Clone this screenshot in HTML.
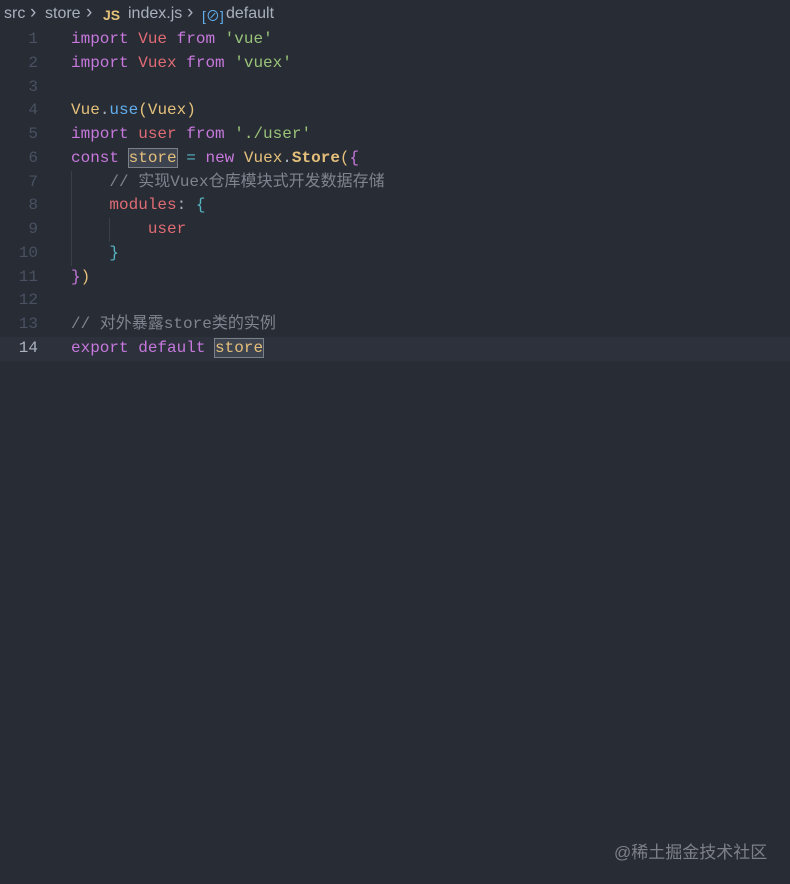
<!DOCTYPE html>
<html><head><meta charset="utf-8"><style>
html,body{margin:0;padding:0;width:790px;height:884px;background:#282c34;overflow:hidden}
.bc{position:absolute;top:5px;left:0;height:22px;width:400px;font:16px "Liberation Sans","Noto Sans CJK SC",sans-serif;color:#a9b0bd;white-space:nowrap}
.bc span{position:absolute;top:0}
.bc .ch{font-size:19px;top:-3px}
.js{color:#e5c07b;font-weight:bold;font-size:14px;top:2px!important}
.code{position:absolute;top:28px;left:0;right:0;font:16px/23.77px "Liberation Mono","Noto Sans CJK SC",monospace}
.ln{position:absolute;left:0;width:38px;text-align:right;color:#495162}
.l{position:relative;height:23.77px}
.t{position:absolute;left:71px;color:#abb2bf;white-space:pre}
.cur{background:#2c313c}
.cur .ln{color:#abb2bf}
.k{color:#c678dd}.v{color:#e06c75}.s{color:#98c379}.y{color:#e5c07b}.f{color:#61afef}.c{color:#7f848e}.o{color:#56b6c2}.b{color:#e5c07b;font-weight:bold}
.hl{outline:1px solid #7a7f88;background:#3e4350}
.guide{position:absolute;left:71px;width:1px;background:#3b4048}
.wm{position:absolute;left:614px;top:838px;font:17px "Liberation Sans","Noto Sans CJK SC",sans-serif;color:#7d8088}
</style></head><body>
<div class="bc"><span style="left:4px">src</span><span class="ch" style="left:30px">›</span><span style="left:45px">store</span><span class="ch" style="left:86px">›</span><span class="js" style="left:103px">JS</span><span style="left:128px">index.js</span><span class="ch" style="left:187px">›</span><span style="left:202px;color:#61afef;font-size:14px;top:1px">[⊘]</span><span style="left:226px">default</span></div>
<div class="code">
<div class="guide" style="top:143px;height:95px"></div>
<div class="guide" style="left:109px;top:190px;height:24px"></div>
<div class="l"><span class="ln">1</span><span class="t"><span class="k">import</span> <span class="v">Vue</span> <span class="k">from</span> <span class="s">'vue'</span></span></div>
<div class="l"><span class="ln">2</span><span class="t"><span class="k">import</span> <span class="v">Vuex</span> <span class="k">from</span> <span class="s">'vuex'</span></span></div>
<div class="l"><span class="ln">3</span></div>
<div class="l"><span class="ln">4</span><span class="t"><span class="y">Vue</span>.<span class="f">use</span><span class="y">(</span><span class="y">Vuex</span><span class="y">)</span></span></div>
<div class="l"><span class="ln">5</span><span class="t"><span class="k">import</span> <span class="v">user</span> <span class="k">from</span> <span class="s">'./user'</span></span></div>
<div class="l"><span class="ln">6</span><span class="t"><span class="k">const</span> <span class="y hl">store</span> <span class="o">=</span> <span class="k">new</span> <span class="y">Vuex</span>.<span class="b">Store</span><span class="y">(</span><span class="k">{</span></span></div>
<div class="l"><span class="ln">7</span><span class="t">    <span class="c">// 实现Vuex仓库模块式开发数据存储</span></span></div>
<div class="l"><span class="ln">8</span><span class="t">    <span class="v">modules</span>: <span class="o">{</span></span></div>
<div class="l"><span class="ln">9</span><span class="t">        <span class="v">user</span></span></div>
<div class="l"><span class="ln">10</span><span class="t">    <span class="o">}</span></span></div>
<div class="l"><span class="ln">11</span><span class="t"><span class="k">}</span><span class="y">)</span></span></div>
<div class="l"><span class="ln">12</span></div>
<div class="l"><span class="ln">13</span><span class="t"><span class="c">// 对外暴露store类的实例</span></span></div>
<div class="l cur"><span class="ln">14</span><span class="t"><span class="k">export</span> <span class="k">default</span> <span class="y hl">store</span></span></div>
</div>
<div class="wm">@稀土掘金技术社区</div>
</body></html>
